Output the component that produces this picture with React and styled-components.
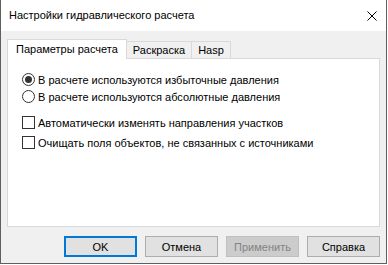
import React from 'react';
import styled, { createGlobalStyle } from 'styled-components';

const GlobalStyle = createGlobalStyle`
    html, body {
        margin: 0;
        padding: 0;
        background: #ffffff;
    }
    body {
        font-family: "Liberation Sans", Arial, sans-serif;
        font-size: 11px;
        color: #000;
    }
`;

const Window = styled.div`
    width: 387px;
    height: 264px;
    box-sizing: border-box;
    border: 1px solid #5f5f5f;
    border-top: none;
    display: flex;
    flex-direction: column;
    background: #f0f0f0;
`;

const TitleBar = styled.div`
    height: 31px;
    flex: none;
    background: #fff;
    display: flex;
    align-items: center;
    justify-content: space-between;
    padding: 0 9px 0 8px;
`;

const Title = styled.span`
    font-size: 11px;
    line-height: 16px;
    margin-top: -1px;
`;

const CloseButton = styled.div`
    width: 10px;
    height: 10px;
    display: flex;
`;

const Body = styled.div`
    flex: 1;
    display: flex;
    flex-direction: column;
    padding: 8px 6px 7px 6px;
`;

const TabStrip = styled.div`
    display: flex;
    align-items: flex-end;
    height: 20px;
    margin-bottom: -1px;
    position: relative;
    z-index: 1;
`;

const Tab = styled.div`
    box-sizing: border-box;
    height: ${p => (p.$active ? '20px' : '18px')};
    padding: ${p => (p.$active ? '0 8px 0 8px' : '0 6px')};
    margin-left: ${p => (p.$first ? '0' : '-1px')};
    border: 1px solid #d9d9d9;
    border-bottom: ${p => (p.$active ? 'none' : '1px solid #d9d9d9')};
    background: ${p => (p.$active ? '#fff' : '#f0f0f0')};
    position: relative;
    z-index: ${p => (p.$active ? 2 : 1)};
    display: flex;
    align-items: center;
    line-height: 15px;
    white-space: nowrap;
`;

const Panel = styled.div`
    box-sizing: border-box;
    height: 169px;
    background: #fff;
    border: 1px solid #d9d9d9;
    padding: 12px 14px 0 14px;
    display: flex;
    flex-direction: column;
`;

const Group = styled.div`
    display: flex;
    flex-direction: column;
    gap: ${p => p.$gap || 0}px;
    margin-top: ${p => p.$top || 0}px;
`;

const Option = styled.div`
    height: 17px;
    display: flex;
    align-items: center;
    gap: 3px;
    white-space: nowrap;
`;

const Radio = styled.span`
    box-sizing: border-box;
    width: 13px;
    height: 13px;
    border-radius: 50%;
    border: 1px solid #333;
    background: #fff;
    display: flex;
    align-items: center;
    justify-content: center;

    &::after {
        content: '';
        width: 7px;
        height: 7px;
        border-radius: 50%;
        background: ${p => (p.$checked ? '#333' : 'transparent')};
    }
`;

const CheckBox = styled.span`
    box-sizing: border-box;
    width: 13px;
    height: 13px;
    border: 1px solid #333;
    background: #fff;
`;

const ButtonRow = styled.div`
    display: flex;
    justify-content: flex-end;
    gap: 8px;
    margin-top: 9px;
`;

const Button = styled.button`
    box-sizing: border-box;
    width: 73px;
    height: 21px;
    padding: 0;
    font-family: inherit;
    font-size: 11px;
    background: ${p => (p.disabled ? '#cccccc' : '#e1e1e1')};
    color: ${p => (p.disabled ? '#838383' : '#000')};
    border: ${p => (p.$default ? '2px solid #0078d7' : p.disabled ? '1px solid #bfbfbf' : '1px solid #adadad')};
    outline: none;
`;

const App = () => {
    return (
        <>
            <GlobalStyle />
            <Window>
                <TitleBar>
                    <Title>Настройки гидравлического расчета</Title>
                    <CloseButton>
                        <svg width="10" height="10" viewBox="0 0 10 10">
                            <path d="M0.5 0.5 L9.5 9.5 M9.5 0.5 L0.5 9.5" stroke="#000" strokeWidth="1" fill="none" />
                        </svg>
                    </CloseButton>
                </TitleBar>
                <Body>
                    <TabStrip>
                        <Tab $active $first>Параметры расчета</Tab>
                        <Tab>Раскраска</Tab>
                        <Tab>Hasp</Tab>
                    </TabStrip>
                    <Panel>
                        <Group>
                            <Option><Radio $checked />В расчете используются избыточные давления</Option>
                            <Option><Radio />В расчете используются абсолютные давления</Option>
                        </Group>
                        <Group $top={9} $gap={3}>
                            <Option><CheckBox />Автоматически изменять направления участков</Option>
                            <Option><CheckBox />Очищать поля объектов, не связанных с источниками</Option>
                        </Group>
                    </Panel>
                    <ButtonRow>
                        <Button $default>OK</Button>
                        <Button>Отмена</Button>
                        <Button disabled>Применить</Button>
                        <Button>Справка</Button>
                    </ButtonRow>
                </Body>
            </Window>
        </>
    );
};

export default App;
